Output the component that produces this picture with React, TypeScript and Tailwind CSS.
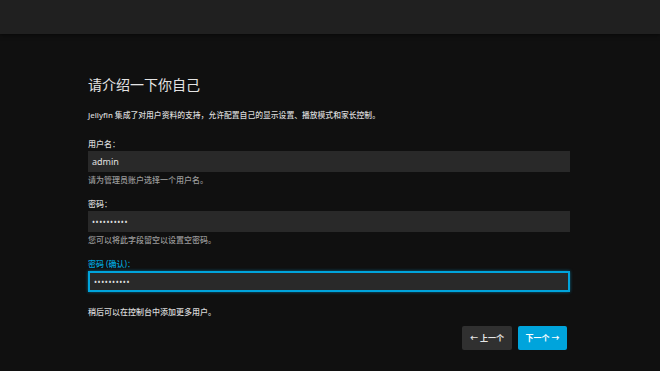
const font = { fontFamily: '"Noto Sans", "Noto Sans CJK SC", sans-serif' }

const Field = ({ label, value, help, focused, password }: { label: string; value: string; help?: string; focused?: boolean; password?: boolean }) => {
    return (
        <div className="flex flex-col">
            <label className={`text-[8px] leading-[10px] h-[10px] font-medium ${focused ? 'text-[#00a4dc]' : 'text-[#d6d6d6]'}`}>{label}</label>
            <div
                className={`mt-[2px] h-[21px] flex items-center px-[4px] bg-[#292929] ${focused ? 'border-2 border-[#00a4dc] shadow-[0_0_3px_rgba(0,164,220,0.6)]' : ''}`}
            >
                <span className={`text-[#e0e0e0] ${password ? 'text-[8px] tracking-[0.6px]' : 'text-[9px]'}`}>{value}</span>
            </div>
            {help && <p className="mt-[3px] text-[8px] leading-[10px] font-medium text-[#9a9a9a]">{help}</p>}
        </div>
    )
}

export default function App() {
    return (
        <div className="w-[660px] h-[371px] bg-[#101010] overflow-hidden" style={font}>
            <div className="h-[34px] bg-[#202020] shadow-[0_1px_4px_rgba(0,0,0,0.6)]" />
            <div className="pl-[88px] w-[570px]">
                <h1 className="mt-[41px] text-[14px] leading-[20px] text-[#e4e4e4]">请介绍一下你自己</h1>
                <p className="mt-[15px] text-[7.8px] leading-[10px] font-medium text-[#d8d8d8]">
                    Jellyfin 集成了对用户资料的支持，允许配置自己的显示设置、播放模式和家长控制。
                </p>
                <div className="mt-[19px]">
                    <Field label="用户名：" value="admin" help="请为管理员账户选择一个用户名。" />
                </div>
                <div className="mt-[14px]">
                    <Field label="密码：" value="••••••••••" help="您可以将此字段留空以设置空密码。" password />
                </div>
                <div className="mt-[14px]">
                    <Field label="密码 (确认)：" value="••••••••••" focused password />
                </div>
                <p className="mt-[15px] text-[8px] leading-[10px] font-medium text-[#d8d8d8]">稍后可以在控制台中添加更多用户。</p>
                <div className="mt-[9px] flex justify-end gap-[6px] pr-[3px]">
                    <button className="w-[50px] h-[24px] rounded-[2px] bg-[#303030] text-[#e6e6e6] text-[8px] font-semibold flex items-center justify-center gap-[2px]">
                        <span>←</span><span>上一个</span>
                    </button>
                    <button className="w-[49px] h-[24px] rounded-[2px] bg-[#00a4dc] text-white text-[8px] font-semibold flex items-center justify-center gap-[2px]">
                        <span>下一个</span><span>→</span>
                    </button>
                </div>
            </div>
        </div>
    )
}
